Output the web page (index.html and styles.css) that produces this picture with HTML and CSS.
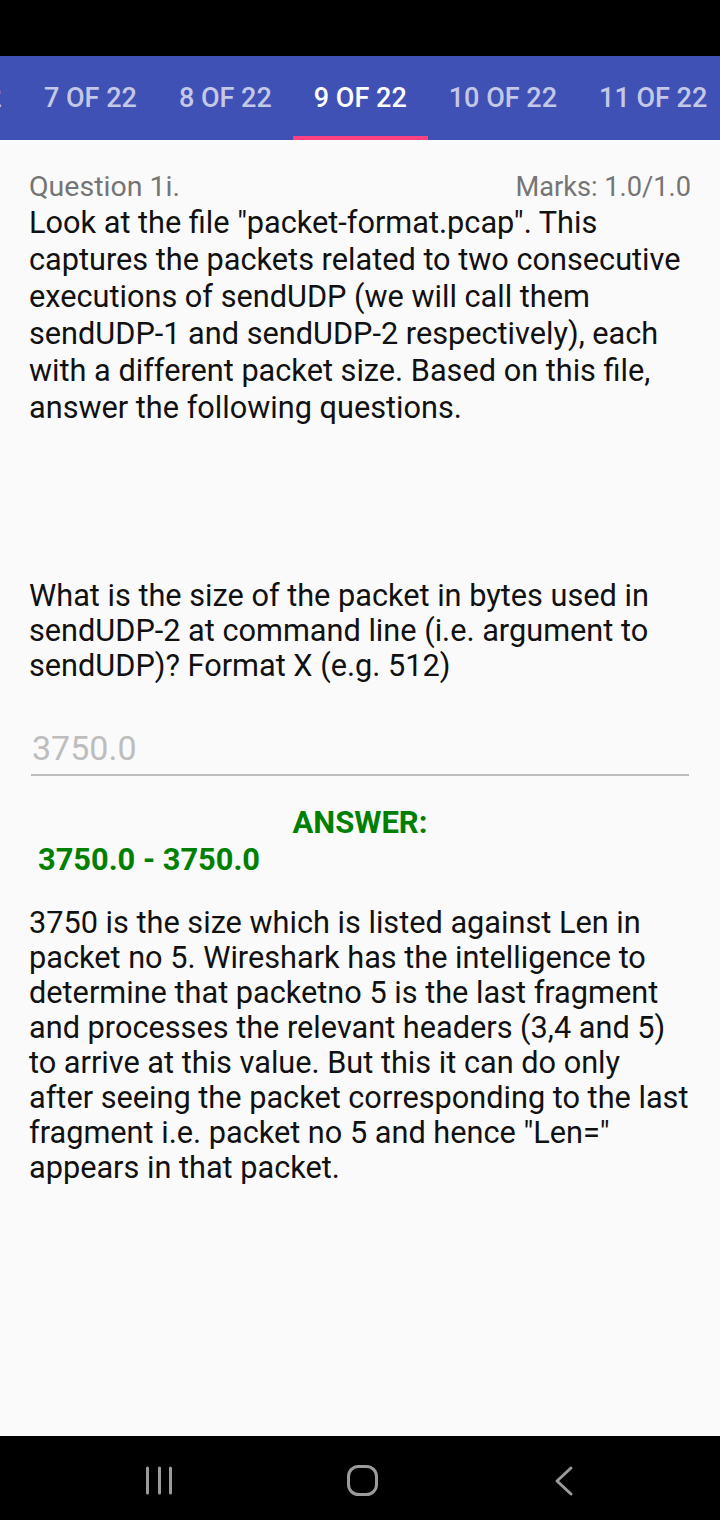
FILE: index.html
```html
<!DOCTYPE html>
<html>
<head>
<meta charset="utf-8">
<link rel="stylesheet" href="styles.css">
</head>
<body>
<div class="screen">
  <div class="statusbar"></div>
  <div class="tabbar">
    <div class="tabstrip">
      <div class="tab">6 OF 22</div>
      <div class="tab">7 OF 22</div>
      <div class="tab">8 OF 22</div>
      <div class="tab active">9 OF 22</div>
      <div class="tab">10 OF 22</div>
      <div class="tab">11 OF 22</div>
    </div>
  </div>
  <main class="content">
    <div class="qhead">
      <span class="qnum">Question 1i.</span>
      <span class="marks">Marks: 1.0/1.0</span>
    </div>
    <p class="intro">Look at the file "packet-format.pcap". This captures the packets related to two consecutive executions of sendUDP (we will call them sendUDP-1 and sendUDP-2 respectively), each with a different packet size. Based on this file, answer the following questions.</p>
    <p class="question">What is the size of the packet in bytes used in sendUDP-2 at command line (i.e. argument to sendUDP)? Format X (e.g. 512)</p>
    <div class="field"><span class="fieldtext">3750.0</span></div>
    <div class="answerlabel">ANSWER:</div>
    <div class="answerrange">3750.0 - 3750.0</div>
    <p class="explain">3750 is the size which is listed against Len in packet no 5. Wireshark has the intelligence to determine that packetno 5 is the last fragment and processes the relevant headers (3,4 and 5) to arrive at this value. But this it can do only after seeing the packet corresponding to the last fragment i.e. packet no 5 and hence "Len=" appears in that packet.</p>
  </main>
  <nav class="navbar">
    <svg class="navicon" width="40" height="40" viewBox="0 0 40 40">
      <g stroke="#9b9b9b" stroke-width="3" stroke-linecap="round" fill="none">
        <line x1="8.5" y1="7" x2="8.5" y2="32"/>
        <line x1="20.5" y1="7" x2="20.5" y2="32"/>
        <line x1="31.5" y1="7" x2="31.5" y2="32"/>
      </g>
    </svg>
    <svg class="navicon" width="40" height="40" viewBox="0 0 40 40">
      <rect x="5.5" y="5.5" width="28" height="28" rx="10" ry="10" stroke="#9b9b9b" stroke-width="3" fill="none"/>
    </svg>
    <svg class="navicon" width="40" height="40" viewBox="0 0 40 40">
      <polyline points="23,7 9,20 23,33" stroke="#9b9b9b" stroke-width="3" stroke-linecap="round" stroke-linejoin="round" fill="none"/>
    </svg>
  </nav>
</div>
</body>
</html>
```

FILE: styles.css
```css
html, body {
  margin: 0;
  padding: 0;
}
body {
  width: 720px;
  height: 1520px;
  font-family: Roboto, "Noto Sans", sans-serif;
  background: #000;
}
.screen {
  width: 720px;
  height: 1520px;
  display: flex;
  flex-direction: column;
  background: #fafafa;
  overflow: hidden;
}
.statusbar {
  height: 56px;
  background: #000;
  flex: none;
}
.tabbar {
  height: 84px;
  background: #3f51b5;
  flex: none;
  overflow: hidden;
}
.tabstrip {
  display: flex;
  height: 84px;
  margin-left: -112px;
}
.tab {
  flex: none;
  height: 84px;
  box-sizing: border-box;
  padding: 3px 21px 0 21px;
  display: flex;
  align-items: center;
  justify-content: center;
  font-size: 27px;
  font-weight: 500;
  color: rgba(255, 255, 255, 0.7);
  white-space: nowrap;
  border-bottom: 4px solid transparent;
}
.tab.active {
  color: #fff;
  border-bottom-color: #ff4081;
}
.content {
  flex: 1;
  padding: 29px 29px 0 29px;
  color: #111;
}
.qhead {
  display: flex;
  justify-content: space-between;
  align-items: baseline;
  height: 35px;
  line-height: 35px;
  color: #757575;
}
.qnum {
  font-size: 28.5px;
}
.marks {
  font-size: 27.2px;
}
.intro {
  margin: 0;
  font-size: 30.7px;
  line-height: 37px;
}
.question {
  margin: 152px 0 0 0;
  font-size: 30.7px;
  line-height: 35px;
}
.field {
  margin: 39px 2px 0 2px;
  border-bottom: 2px solid #bdbdbd;
  height: 52px;
  display: flex;
  align-items: center;
  padding-left: 1px;
}
.fieldtext {
  font-size: 34px;
  color: #bdbdbd;
}
.answerlabel {
  margin-top: 28px;
  text-align: center;
  font-size: 31px;
  font-weight: 700;
  line-height: 37px;
  color: #008000;
}
.answerrange {
  padding-left: 9px;
  font-size: 30.8px;
  font-weight: 700;
  line-height: 37px;
  color: #008000;
}
.explain {
  margin: 27px 0 0 0;
  font-size: 30.7px;
  line-height: 35px;
}
.navbar {
  height: 84px;
  flex: none;
  background: #000;
  display: flex;
  align-items: center;
  padding: 0 0 0 139px;
}
.navicon {
  display: block;
  margin-top: 6px;
}
.navicon:nth-child(2) {
  margin-left: 164px;
}
.navicon:nth-child(3) {
  margin-left: 165px;
}
```
